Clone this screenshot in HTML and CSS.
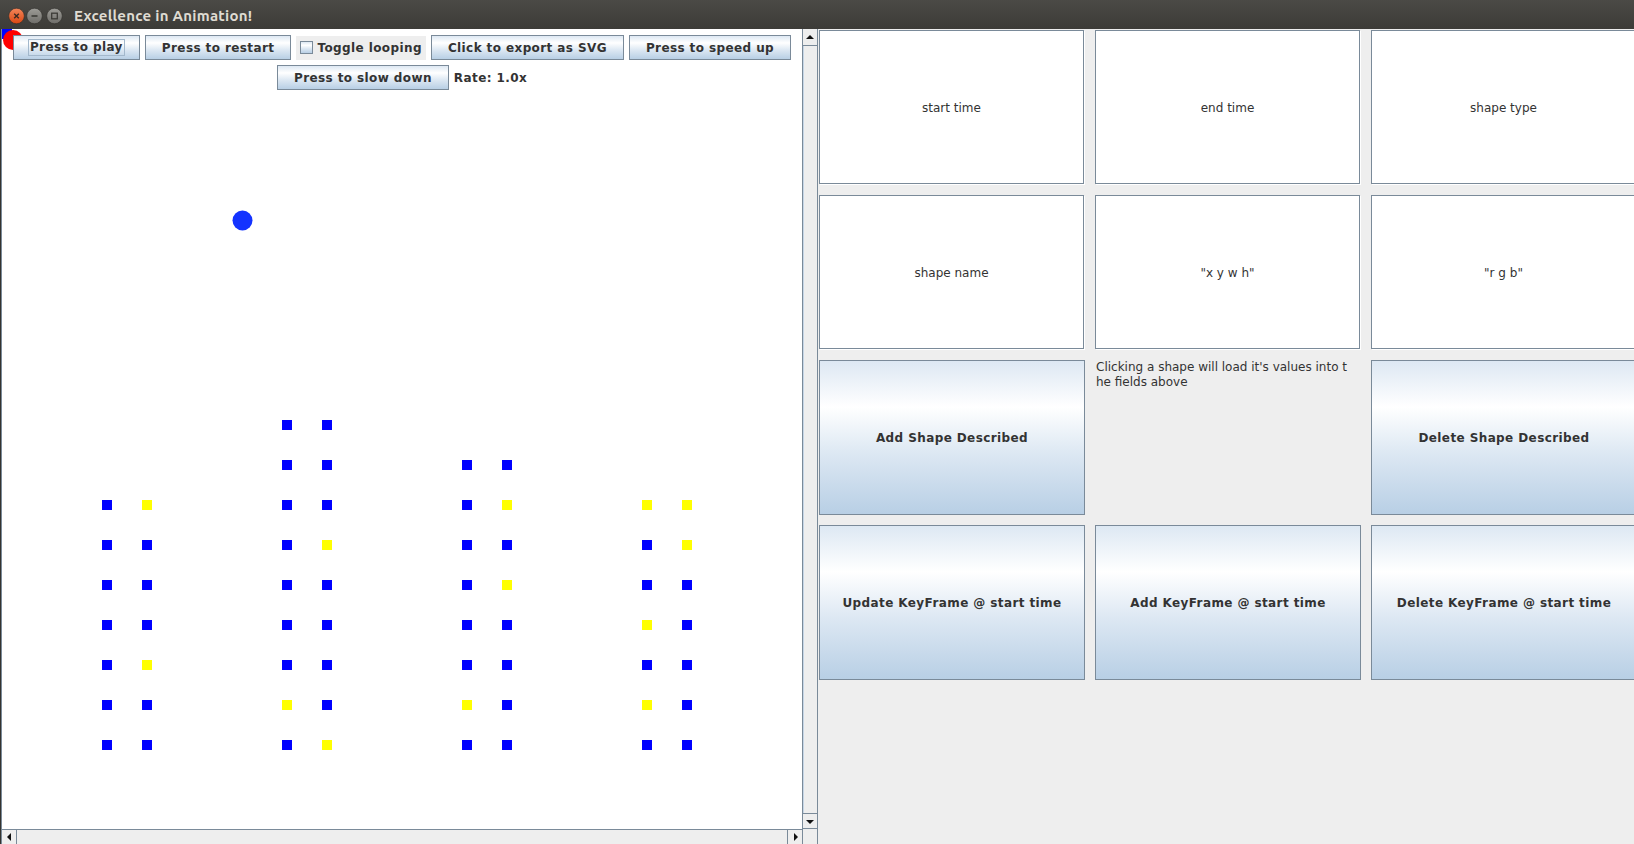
FILE: index.html
```html
<!DOCTYPE html>
<html>
<head>
<meta charset="utf-8">
<title>Excellence in Animation!</title>
<link rel="stylesheet" href="styles.css">
</head>
<body>
<div class="titlebar">
  <svg class="winbtns" width="70" height="29" viewBox="0 0 70 29">
    <defs>
      <linearGradient id="cg" x1="0" y1="0" x2="0" y2="1">
        <stop offset="0" stop-color="#f3865a"/>
        <stop offset="1" stop-color="#dc4712"/>
      </linearGradient>
      <linearGradient id="gg" x1="0" y1="0" x2="0" y2="1">
        <stop offset="0" stop-color="#9d9c97"/>
        <stop offset="1" stop-color="#6e6d69"/>
      </linearGradient>
    </defs>
    <circle cx="16.5" cy="16" r="7.8" fill="url(#cg)" stroke="#2e2c29" stroke-width="0.6"/>
    <path d="M14.2 13.7 L18.8 18.3 M18.8 13.7 L14.2 18.3" stroke="#3a2a22" stroke-width="1.4"/>
    <circle cx="34.5" cy="16" r="7.8" fill="url(#gg)" stroke="#2e2c29" stroke-width="0.6"/>
    <path d="M31.5 16 H37.5" stroke="#3c3b37" stroke-width="1.6"/>
    <circle cx="54.5" cy="16" r="7.8" fill="url(#gg)" stroke="#2e2c29" stroke-width="0.6"/>
    <rect x="51.7" y="13.2" width="5.6" height="5.6" fill="none" stroke="#3c3b37" stroke-width="1.3"/>
  </svg>
  <div class="title">Excellence in Animation!</div>
</div>

<div class="frame">
  <div class="scrollpane">
    <div class="pane-left">
      <div class="viewport">
        <svg class="canvas" width="800" height="800" viewBox="0 0 800 800">
          <rect x="0" y="0" width="10" height="10" fill="#0000ff"/>
          <circle cx="11" cy="11" r="10" fill="#ff0000"/>
          <circle cx="240.5" cy="191.5" r="10" fill="#1433ff"/>
          <g class="sq">
            <!-- group 1 -->
            <rect x="100" y="471" width="10" height="10" fill="#0000ff"/><rect x="140" y="471" width="10" height="10" fill="#ffff00"/>
            <rect x="100" y="511" width="10" height="10" fill="#0000ff"/><rect x="140" y="511" width="10" height="10" fill="#0000ff"/>
            <rect x="100" y="551" width="10" height="10" fill="#0000ff"/><rect x="140" y="551" width="10" height="10" fill="#0000ff"/>
            <rect x="100" y="591" width="10" height="10" fill="#0000ff"/><rect x="140" y="591" width="10" height="10" fill="#0000ff"/>
            <rect x="100" y="631" width="10" height="10" fill="#0000ff"/><rect x="140" y="631" width="10" height="10" fill="#ffff00"/>
            <rect x="100" y="671" width="10" height="10" fill="#0000ff"/><rect x="140" y="671" width="10" height="10" fill="#0000ff"/>
            <rect x="100" y="711" width="10" height="10" fill="#0000ff"/><rect x="140" y="711" width="10" height="10" fill="#0000ff"/>
            <!-- group 2 -->
            <rect x="280" y="391" width="10" height="10" fill="#0000ff"/><rect x="320" y="391" width="10" height="10" fill="#0000ff"/>
            <rect x="280" y="431" width="10" height="10" fill="#0000ff"/><rect x="320" y="431" width="10" height="10" fill="#0000ff"/>
            <rect x="280" y="471" width="10" height="10" fill="#0000ff"/><rect x="320" y="471" width="10" height="10" fill="#0000ff"/>
            <rect x="280" y="511" width="10" height="10" fill="#0000ff"/><rect x="320" y="511" width="10" height="10" fill="#ffff00"/>
            <rect x="280" y="551" width="10" height="10" fill="#0000ff"/><rect x="320" y="551" width="10" height="10" fill="#0000ff"/>
            <rect x="280" y="591" width="10" height="10" fill="#0000ff"/><rect x="320" y="591" width="10" height="10" fill="#0000ff"/>
            <rect x="280" y="631" width="10" height="10" fill="#0000ff"/><rect x="320" y="631" width="10" height="10" fill="#0000ff"/>
            <rect x="280" y="671" width="10" height="10" fill="#ffff00"/><rect x="320" y="671" width="10" height="10" fill="#0000ff"/>
            <rect x="280" y="711" width="10" height="10" fill="#0000ff"/><rect x="320" y="711" width="10" height="10" fill="#ffff00"/>
            <!-- group 3 -->
            <rect x="460" y="431" width="10" height="10" fill="#0000ff"/><rect x="500" y="431" width="10" height="10" fill="#0000ff"/>
            <rect x="460" y="471" width="10" height="10" fill="#0000ff"/><rect x="500" y="471" width="10" height="10" fill="#ffff00"/>
            <rect x="460" y="511" width="10" height="10" fill="#0000ff"/><rect x="500" y="511" width="10" height="10" fill="#0000ff"/>
            <rect x="460" y="551" width="10" height="10" fill="#0000ff"/><rect x="500" y="551" width="10" height="10" fill="#ffff00"/>
            <rect x="460" y="591" width="10" height="10" fill="#0000ff"/><rect x="500" y="591" width="10" height="10" fill="#0000ff"/>
            <rect x="460" y="631" width="10" height="10" fill="#0000ff"/><rect x="500" y="631" width="10" height="10" fill="#0000ff"/>
            <rect x="460" y="671" width="10" height="10" fill="#ffff00"/><rect x="500" y="671" width="10" height="10" fill="#0000ff"/>
            <rect x="460" y="711" width="10" height="10" fill="#0000ff"/><rect x="500" y="711" width="10" height="10" fill="#0000ff"/>
            <!-- group 4 -->
            <rect x="640" y="471" width="10" height="10" fill="#ffff00"/><rect x="680" y="471" width="10" height="10" fill="#ffff00"/>
            <rect x="640" y="511" width="10" height="10" fill="#0000ff"/><rect x="680" y="511" width="10" height="10" fill="#ffff00"/>
            <rect x="640" y="551" width="10" height="10" fill="#0000ff"/><rect x="680" y="551" width="10" height="10" fill="#0000ff"/>
            <rect x="640" y="591" width="10" height="10" fill="#ffff00"/><rect x="680" y="591" width="10" height="10" fill="#0000ff"/>
            <rect x="640" y="631" width="10" height="10" fill="#0000ff"/><rect x="680" y="631" width="10" height="10" fill="#0000ff"/>
            <rect x="640" y="671" width="10" height="10" fill="#ffff00"/><rect x="680" y="671" width="10" height="10" fill="#0000ff"/>
            <rect x="640" y="711" width="10" height="10" fill="#0000ff"/><rect x="680" y="711" width="10" height="10" fill="#0000ff"/>
          </g>
        </svg>
        <div class="controls">
          <div class="row">
            <button class="btn"><span class="focus">Press to play</span></button>
            <button class="btn">Press to restart</button>
            <label class="check"><span class="box"></span><span>Toggle looping</span></label>
            <button class="btn">Click to export as SVG</button>
            <button class="btn">Press to speed up</button>
          </div>
          <div class="row">
            <button class="btn">Press to slow down</button>
            <span class="rate">Rate: 1.0x</span>
          </div>
        </div>
      </div>
      <div class="hscroll">
        <div class="arrow-btn left"><svg width="5" height="8" viewBox="0 0 5 8"><path d="M4 0 V8 L0 4 Z" fill="#111"/></svg></div>
        <div class="arrow-btn right"><svg width="5" height="8" viewBox="0 0 5 8"><path d="M1 0 V8 L5 4 Z" fill="#111"/></svg></div>
      </div>
    </div>
    <div class="vscroll">
      <div class="arrow-btn up"><svg width="8" height="5" viewBox="0 0 8 5"><path d="M0 4 H8 L4 0 Z" fill="#111"/></svg></div>
      <div class="track"></div>
      <div class="arrow-btn down"><svg width="8" height="5" viewBox="0 0 8 5"><path d="M0 1 H8 L4 5 Z" fill="#111"/></svg></div>
      <div class="corner"></div>
    </div>
  </div>

  <div class="editor">
    <div class="field">start time</div>
    <div class="field">end time</div>
    <div class="field">shape type</div>
    <div class="field">shape name</div>
    <div class="field">"x y w h"</div>
    <div class="field">"r g b"</div>
    <button class="action">Add Shape Described</button>
    <div class="hint">Clicking a shape will load it's values into t<br>he fields above</div>
    <button class="action">Delete Shape Described</button>
    <button class="action">Update KeyFrame @ start time</button>
    <button class="action">Add KeyFrame @ start time</button>
    <button class="action">Delete KeyFrame @ start time</button>
  </div>
</div>
</body>
</html>
```

FILE: styles.css
```css
* { box-sizing: border-box; }

html, body {
  margin: 0;
  padding: 0;
}

body {
  width: 1634px;
  height: 844px;
  overflow: hidden;
  background: #eeeeee;
  font-family: "DejaVu Sans", "Noto Sans", sans-serif;
  font-size: 12px;
  color: #333333;
}

/* ---------- title bar ---------- */
.titlebar {
  height: 29px;
  display: flex;
  background: linear-gradient(#4b4a46, #3c3b37);
}

.winbtns {
  display: block;
  flex: none;
}

.title {
  margin-left: 4px;
  padding-top: 3px;
  line-height: 26px;
  font-family: "Ubuntu", "Liberation Sans", sans-serif;
  font-weight: bold;
  font-size: 15px;
  letter-spacing: 0.25px;
  color: #dfdbd2;
  white-space: nowrap;
}

/* ---------- frame ---------- */
.frame {
  display: flex;
  height: 815px;
  border-left: 1px solid #34332f;
}

.scrollpane {
  flex: none;
  display: flex;
  width: 817px;
  border-left: 1px solid #7a8a99;
}

.pane-left {
  display: flex;
  flex-direction: column;
  width: 800px;
}

.viewport {
  position: relative;
  width: 800px;
  height: 800px;
  background: #ffffff;
  overflow: hidden;
}

.canvas {
  position: absolute;
  left: 0;
  top: 0;
  display: block;
}

.controls {
  position: relative;
  display: flex;
  flex-direction: column;
  align-items: center;
  padding-top: 6px;
  gap: 5px;
}

.row {
  display: flex;
  align-items: center;
  gap: 5px;
}

.btn {
  margin: 0;
  height: 25px;
  padding: 0 16px;
  border: 1px solid #7a8a99;
  border-radius: 0;
  background: linear-gradient(#dde8f3 0%, #ffffff 30%, #dde8f3 60%, #b8cfe5 100%);
  font-family: "DejaVu Sans", sans-serif;
  font-weight: bold;
  font-size: 12px;
  letter-spacing: 0.4px;
  color: #333333;
  white-space: nowrap;
  display: flex;
  align-items: center;
  justify-content: center;
}

.focus {
  display: inline-block;
  margin: 0 -2px;
  padding: 0 1px;
  line-height: 15px;
  border: 1px solid #a3b8cc;
}

.check {
  height: 24px;
  display: flex;
  align-items: center;
  gap: 4px;
  padding: 0 4px;
  background: #eeeeee;
  font-weight: bold;
  font-size: 12px;
  letter-spacing: 0.4px;
  color: #333333;
  white-space: nowrap;
}

.box {
  width: 13px;
  height: 13px;
  border: 1px solid #7a8a99;
  background: linear-gradient(#dde8f3 0%, #ffffff 30%, #dde8f3 60%, #b8cfe5 100%);
}

.rate {
  font-weight: bold;
  font-size: 12px;
  letter-spacing: 0.4px;
  color: #333333;
  white-space: nowrap;
}

/* ---------- scrollbars ---------- */
.hscroll {
  height: 15px;
  border-top: 1px solid #7a8a99;
  background: #eeeeee;
  display: flex;
  justify-content: space-between;
}

.vscroll {
  width: 16px;
  display: flex;
  flex-direction: column;
  border-left: 1px solid #7a8a99;
  border-right: 1px solid #7a8a99;
  background: #eeeeee;
}

.arrow-btn {
  display: flex;
  align-items: center;
  justify-content: center;
  background: #eeeeee;
}

.arrow-btn svg { display: block; }

.arrow-btn.left {
  width: 15px;
  border-right: 1px solid #7a8a99;
}

.arrow-btn.right {
  width: 15px;
  border-left: 1px solid #7a8a99;
}

.arrow-btn.up {
  height: 17px;
  border-bottom: 1px solid #7a8a99;
  border-top: 1px solid #eeeeee;
}

.arrow-btn.down {
  height: 16px;
  border-top: 1px solid #7a8a99;
  border-bottom: 1px solid #7a8a99;
}

.track {
  flex: 1;
  border-left: 1px solid #c6d6e6;
}

.corner {
  height: 15px;
}

/* ---------- editor grid ---------- */
.editor {
  flex: 1;
  min-width: 0;
  overflow: hidden;
  padding: 1px 0 0 1px;
  display: grid;
  grid-template-columns: repeat(3, 266px);
  grid-template-rows: repeat(4, 155px);
  gap: 10px;
  align-content: start;
}

.field {
  background: #ffffff;
  border: 1px solid #7a8a99;
  box-shadow: 1px 1px 0 #ffffff;
  margin: 0 1px 1px 0;
  padding-top: 2px;
  display: flex;
  align-items: center;
  justify-content: center;
  font-size: 12px;
  color: #333333;
  white-space: nowrap;
}

.action {
  margin: 0;
  padding: 0;
  border: 1px solid #7a8a99;
  border-radius: 0;
  background: linear-gradient(#dde8f3 0%, #ffffff 30%, #dde8f3 60%, #b8cfe5 100%);
  font-family: "DejaVu Sans", sans-serif;
  font-weight: bold;
  font-size: 12px;
  letter-spacing: 0.4px;
  color: #333333;
  white-space: nowrap;
}

.hint {
  padding: 0 1px;
  line-height: 15px;
  font-size: 12px;
  color: #333333;
  white-space: nowrap;
}
```
